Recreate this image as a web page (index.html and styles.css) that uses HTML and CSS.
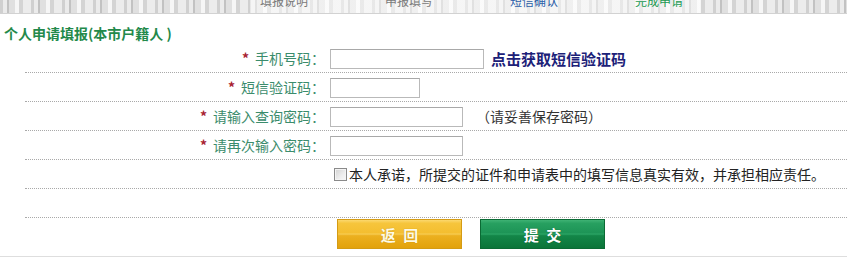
FILE: index.html
```html
<!DOCTYPE html>
<html lang="zh-CN">
<head>
<meta charset="utf-8">
<title>个人申请填报</title>
<link rel="stylesheet" href="styles.css">
</head>
<body>
<div class="steps">
  <div class="step-list">
    <span class="step step-done">填报说明</span>
    <span class="step step-done">申报填写</span>
    <span class="step step-current">短信确认</span>
    <span class="step step-next">完成申请</span>
  </div>
</div>
<h1 class="title">个人申请填报(本市户籍人 )</h1>
<div class="form">
  <div class="row">
    <label class="label"><span class="req">*</span>手机号码：</label>
    <input class="field field-phone" type="text">
    <a class="sms-link">点击获取短信验证码</a>
  </div>
  <div class="row">
    <label class="label"><span class="req">*</span>短信验证码：</label>
    <input class="field field-code" type="text">
  </div>
  <div class="row">
    <label class="label"><span class="req">*</span>请输入查询密码：</label>
    <input class="field field-pwd" type="password">
    <span class="note">（请妥善保存密码）</span>
  </div>
  <div class="row">
    <label class="label"><span class="req">*</span>请再次输入密码：</label>
    <input class="field field-pwd" type="password">
  </div>
  <div class="row">
    <span class="label"></span>
    <input class="agree-box" type="checkbox">
    <span class="agree-text">本人承诺，所提交的证件和申请表中的填写信息真实有效，并承担相应责任。</span>
  </div>
  <div class="row"></div>
</div>
<div class="actions">
  <button class="btn btn-back" type="button">返 回</button>
  <button class="btn btn-submit" type="button">提 交</button>
</div>
<div class="footer-line"></div>
</body>
</html>
```
FILE: styles.css
```css
html, body {
  margin: 0;
  padding: 0;
  background: #ffffff;
}
body {
  font-family: "Noto Sans CJK SC", "Noto Sans", sans-serif;
  font-size: 14px;
  color: #222;
}

/* top step strip (cut off) */
.steps {
  height: 13px;
  overflow: hidden;
  border-bottom: 1px solid #d2d2d2;
  background:
    linear-gradient(90deg, rgba(255,255,255,0) 0, rgba(255,255,255,0) 250px, rgba(255,255,255,.5) 250px, rgba(255,255,255,.5) 700px, rgba(255,255,255,0) 700px),
    repeating-linear-gradient(90deg, #d0d0d0 0 3px, #ebebeb 3px 7px, #c2c2c2 7px 9px, #e0e0e0 9px 15px, #f6f6f6 15px 19px, #d4d4d4 19px 23px, #ececec 23px 31px);
}
.step-list {
  display: flex;
  padding-left: 260px;
  margin-top: -5px;
}
.step {
  width: 125px;
  flex: none;
  font-size: 12px;
  line-height: 12px;
}
.step-done { color: #7a7a7a; }
.step-current { color: #2a5ea8; }
.step-next { color: #229a52; }

.title {
  margin: 0;
  height: 30px;
  box-sizing: border-box;
  padding: 12px 0 0 4px;
  font-size: 14px;
  line-height: 14px;
  font-weight: bold;
  color: #23894a;
}

.form {
  margin-left: 25px;
}
.row {
  display: flex;
  align-items: center;
  height: 28px;
  border-bottom: 1px dotted #a9a9a9;
}
.label {
  width: 300px;
  flex: none;
  text-align: right;
  color: #3b8c6c;
  line-height: 16px;
}
.req {
  color: #a82232;
  font-weight: bold;
  margin-right: 6px;
}
.field {
  margin: 1px 0 0 5px;
  height: 20px;
  box-sizing: border-box;
  border: 1px solid #b9b9b9;
  border-top-color: #a8a8a8;
  background: #fff;
  padding: 0 2px;
  font: inherit;
}
.field-phone { width: 154px; }
.field-code { width: 90px; }
.field-pwd { width: 133px; }

.sms-link {
  margin-left: 7px;
  font-size: 15px;
  font-weight: bold;
  color: #1c2178;
  cursor: pointer;
}
.note {
  margin-left: 13px;
  color: #333;
}

.agree-box {
  -webkit-appearance: none;
  appearance: none;
  margin: 0 0 0 9px;
  width: 13px;
  height: 13px;
  box-sizing: border-box;
  border: 1px solid #8a8a8a;
  background: linear-gradient(135deg, #d2d2d2 0%, #eeeeee 60%, #f8f8f8 100%);
  box-shadow: inset 0 0 0 1px #f4f4f4;
}
.agree-text {
  margin-left: 2px;
  color: #222;
}

.actions {
  display: flex;
  gap: 18px;
  padding: 1px 0 0 337px;
}
.btn {
  width: 125px;
  height: 30px;
  box-sizing: border-box;
  padding: 0;
  font-family: "Noto Sans CJK SC", sans-serif;
  font-size: 15px;
  font-weight: bold;
  letter-spacing: 2px;
  text-indent: 2px;
  cursor: pointer;
}
.btn-back {
  color: #fffbe6;
  border: 1px solid #d49b14;
  background: linear-gradient(#fbd86e 0%, #f6c53c 12%, #f4be30 46%, #f7cc52 50%, #ecb020 56%, #e2a20c 100%);
  text-shadow: 0 0 1px #b88200;
}
.btn-submit {
  color: #ffffff;
  border: 1px solid #0b6a34;
  background: linear-gradient(#3fb274 0%, #27a060 12%, #1d9456 46%, #2ba565 50%, #138648 56%, #0b7439 100%);
  text-shadow: 0 0 1px #064d24;
}

.footer-line {
  margin-top: 7px;
  height: 2px;
  background: #dedede;
}
```
